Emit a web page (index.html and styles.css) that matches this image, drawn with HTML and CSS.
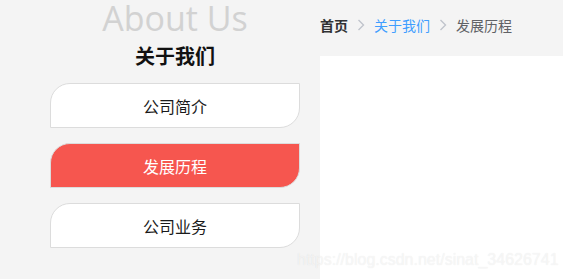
FILE: index.html
```html
<!DOCTYPE html>
<html lang="zh-CN">
<head>
<meta charset="utf-8">
<title>关于我们 - 发展历程</title>
<link rel="stylesheet" href="styles.css">
</head>
<body>
<div class="page">
  <aside class="sidebar">
    <div class="en-title">About Us</div>
    <h2 class="cn-title">关于我们</h2>
    <nav class="menu">
      <a class="menu-item">公司简介</a>
      <a class="menu-item active">发展历程</a>
      <a class="menu-item">公司业务</a>
    </nav>
  </aside>
  <main class="content">
    <div class="breadcrumb">
      <span class="crumb home">首页</span>
      <svg class="sep" width="8" height="12" viewBox="0 0 8 12"><polyline points="1.5,1 6.5,6 1.5,11" fill="none" stroke="#c0c4cc" stroke-width="1.4"/></svg>
      <span class="crumb link">关于我们</span>
      <svg class="sep" width="8" height="12" viewBox="0 0 8 12"><polyline points="1.5,1 6.5,6 1.5,11" fill="none" stroke="#c0c4cc" stroke-width="1.4"/></svg>
      <span class="crumb current">发展历程</span>
    </div>
    <div class="panel"></div>
  </main>
</div>
<div class="watermark">https://blog.csdn.net/sinat_34626741</div>
</body>
</html>
```
FILE: styles.css
```css
html, body {
  margin: 0;
  padding: 0;
  height: 100%;
}
body {
  background: #f4f4f4;
  font-family: "Noto Sans CJK SC", "Noto Sans", sans-serif;
  overflow: hidden;
  position: relative;
}
.page {
  display: flex;
  height: 100%;
}
.sidebar {
  width: 250px;
  margin-left: 50px;
  display: flex;
  flex-direction: column;
  align-items: center;
}
.en-title {
  font-family: "Open Sans", sans-serif;
  font-size: 34px;
  line-height: 34px;
  padding-top: 1px;
  margin-bottom: -1px;
  color: #d2d2d2;
  font-weight: 400;
}
.cn-title {
  margin: 12px 0 0;
  font-size: 20px;
  line-height: 20px;
  font-weight: 700;
  color: #111;
}
.menu {
  margin-top: 17px;
  width: 100%;
  display: flex;
  flex-direction: column;
  gap: 15px;
}
.menu-item {
  box-sizing: border-box;
  height: 45px;
  display: flex;
  align-items: center;
  justify-content: center;
  background: #fff;
  border: 1px solid #dcdcdc;
  border-radius: 20px 0 20px 0;
  font-size: 16px;
  color: #1a1a1a;
}
.menu-item.active {
  background: #f6564f;
  color: #fff;
}
.content {
  flex: 1;
  margin-left: 20px;
  display: flex;
  flex-direction: column;
}
.breadcrumb {
  height: 56px;
  box-sizing: border-box;
  padding-top: 18px;
  display: flex;
  align-items: flex-start;
  font-size: 14px;
  line-height: 14px;
}
.sep {
  margin: 1px 9px 0;
}
.crumb.home {
  color: #303133;
  font-weight: 700;
}
.crumb.link {
  color: #409eff;
}
.crumb.current {
  color: #606266;
}
.panel {
  flex: 1;
  background: #fff;
}
.watermark {
  position: absolute;
  left: 297px;
  top: 250px;
  font-family: "Liberation Sans", Arial, sans-serif;
  font-size: 16px;
  line-height: 20px;
  color: rgba(255, 255, 255, 0.6);
  text-shadow: 0 0 1px rgba(0, 0, 0, 0.1);
  white-space: nowrap;
}
```
